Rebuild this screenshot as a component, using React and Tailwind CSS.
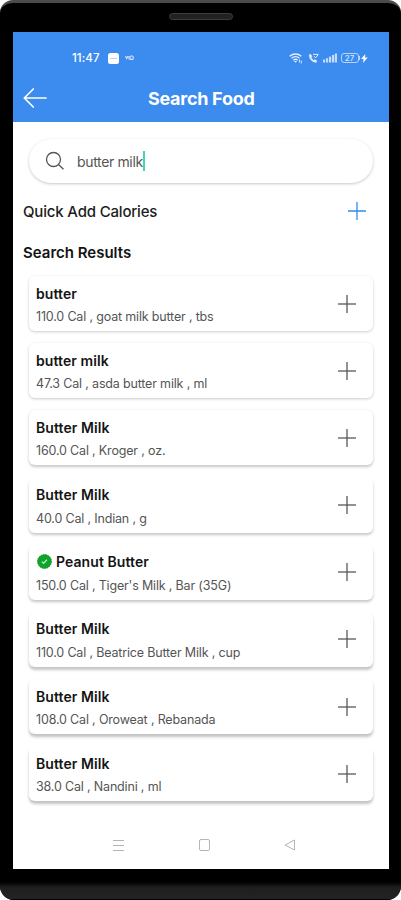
import React from 'react';

const foods = [
  { name: 'butter', detail: '110.0 Cal , goat milk butter , tbs' },
  { name: 'butter milk', detail: '47.3 Cal , asda butter milk , ml' },
  { name: 'Butter Milk', detail: '160.0 Cal , Kroger , oz.' },
  { name: 'Butter Milk', detail: '40.0 Cal , Indian , g' },
  { name: 'Peanut Butter', detail: "150.0 Cal , Tiger's Milk , Bar (35G)", verified: true },
  { name: 'Butter Milk', detail: '110.0 Cal , Beatrice Butter Milk , cup' },
  { name: 'Butter Milk', detail: '108.0 Cal , Oroweat , Rebanada' },
  { name: 'Butter Milk', detail: '38.0 Cal , Nandini , ml' },
];

// Elevation gets stronger towards the bottom of the list
const shadows = [
  'shadow-[0_1px_3px_rgba(0,0,0,0.2)]',
  'shadow-[0_1px_3px_rgba(0,0,0,0.21)]',
  'shadow-[0_1.5px_3px_rgba(0,0,0,0.22)]',
  'shadow-[0_2px_3px_rgba(0,0,0,0.22)]',
  'shadow-[0_2px_3px_rgba(0,0,0,0.23)]',
  'shadow-[0_2.5px_3px_rgba(0,0,0,0.23)]',
  'shadow-[0_2.5px_3px_rgba(0,0,0,0.24)]',
  'shadow-[0_3px_3px_rgba(0,0,0,0.24)]',
];

function PlusIcon({ className }) {
  return (
    <svg className={className} width="18" height="18" viewBox="0 0 18 18" fill="none" stroke="currentColor">
      <path d="M0 9h18" strokeWidth="1.3" />
      <path d="M9 0v18" strokeWidth="1.3" />
    </svg>
  );
}

function StatusBar() {
  return (
    <div className="flex h-[52px] items-center justify-between pl-[59px] pr-[21px] text-white">
      <div className="flex items-center">
        <span className="w-[28px] whitespace-nowrap pt-[2px] text-[11.5px] font-medium leading-none tracking-[0.1px]">11:47</span>
        <svg className="ml-[8px] mr-[1px]" width="11" height="11" viewBox="0 0 11 11">
          <rect width="11" height="11" rx="2.5" fill="#fff" />
          <path d="M2 5.5h7" stroke="#b9d4fa" strokeWidth="1" />
        </svg>
        <svg className="ml-[5px]" width="9" height="6" viewBox="0 0 9 6" fill="none" stroke="#d3e4fd" strokeWidth="1.1">
          <path d="M0.5 1l1.2 2.5L3 1M4 1v3.5" />
          <rect x="5" y="1" width="3.2" height="3.4" rx="1" />
        </svg>
      </div>
      <div className="flex items-center">
        <svg width="14" height="12" viewBox="0 0 14 12" fill="none" stroke="#e4effe" strokeWidth="1.4">
          <path d="M0.7 4.2a8.6 8.6 0 0 1 11.6 0M2.6 6.2a5.7 5.7 0 0 1 7.8 0M4.4 8.2a3.1 3.1 0 0 1 4.2 0" />
          <path d="M6.5 10.8L4.9 8.9h3.2z" fill="#e4effe" stroke="none" />
          <path d="M10.5 7.5v3M12.3 8.5v3" strokeWidth="0.9" />
        </svg>
        <svg className="ml-[5px]" width="11" height="11" viewBox="0 0 11 11" fill="none" stroke="#e4effe">
          <path d="M1.3 1.5C0.9 5.5 4 9.3 8.3 9.4L8.9 7.8 6.8 6.6 5.8 7.3C4.7 6.7 3.8 5.6 3.3 4.4L4 3.2 2.8 1.3z" fill="#e4effe" strokeWidth="0.4" />
          <path d="M5 1.4h5.5M6 3.2l1.6 1.6L10 2" strokeWidth="1" />
        </svg>
        <svg className="ml-[4px]" width="14" height="10" viewBox="0 0 14 10" fill="#c3dafc">
          <rect x="0" y="6.5" width="2.2" height="3" />
          <rect x="3" y="5.2" width="2.2" height="4.3" />
          <rect x="6" y="3.6" width="2.2" height="5.9" />
          <rect x="9" y="2" width="2.2" height="7.5" />
          <rect x="11.8" y="0.5" width="2.2" height="9" />
        </svg>
        <div className="ml-[4px] flex h-[10px] w-[18px] items-center justify-center rounded-[3px] border border-[#b9d4fb] text-[8px] font-medium leading-none text-[#d3e4fd]">
          27
        </div>
        <div className="h-[4px] w-[1.5px] bg-[#b9d4fb]" />
        <svg className="ml-[1px]" width="7" height="9" viewBox="0 0 7 9" fill="#fff">
          <path d="M4.3 0L0 5.1h2.6L2 9l4.8-5.4H4z" />
        </svg>
      </div>
    </div>
  );
}

function FoodCard({ food, shadow }) {
  return (
    <div className={`flex h-[55px] shrink-0 items-center justify-between rounded-[6px] bg-white pl-[7px] pr-[17px] ${shadow}`}>
      <div className="pt-[2px]">
        <div className="flex h-[20px] items-center pt-[1px]">
          {food.verified && (
            <svg className="mb-[2px] ml-[1px] mr-[4px]" width="15" height="15" viewBox="0 0 15 15">
              <circle cx="7.5" cy="7.5" r="7" fill="#0fa32b" stroke="#0b8f25" strokeWidth="0.8" strokeDasharray="1.6 0.8" />
              <path d="M4.8 7.6l1.8 1.7 3.3-3.5" fill="none" stroke="#b5ecc0" strokeWidth="1.3" />
            </svg>
          )}
          <span className="whitespace-nowrap text-[14px] font-semibold leading-none tracking-[0.08px] text-[#141414]">{food.name}</span>
        </div>
        <div className="mt-[5px] whitespace-nowrap text-[12.5px] leading-[18px] tracking-[-0.17px] text-[#555]">{food.detail}</div>
      </div>
      <PlusIcon className="text-[#585858]" />
    </div>
  );
}

function App() {
  return (
    <div className="flex h-[900px] w-[401px] flex-col overflow-hidden bg-white font-['Inter','Liberation_Sans',sans-serif]">
      <div className="flex h-full flex-col overflow-hidden rounded-t-[13px] rounded-b-[14px] border-t-[3px] border-t-[#4b4b4b] bg-black">
        <div className="flex h-[29px] shrink-0 items-center justify-center">
          <div className="mt-[-2px] h-[7px] w-[64px] rounded-full border border-[#3c3c3c] bg-[#222]" />
        </div>

        <div className="ml-[13px] flex h-[837px] w-[376px] shrink-0 flex-col overflow-hidden bg-white">
          <div className="h-[90px] shrink-0 bg-[#3c8bef]">
            <StatusBar />
            <div className="flex h-[28px] items-center pl-[10px]">
              <svg width="24" height="20" viewBox="0 0 24 20" fill="none" stroke="#fff" strokeWidth="1.7" strokeLinecap="round" strokeLinejoin="round">
                <path d="M23 10H1.3M10.3 1L1.3 10l9 9" />
              </svg>
              <h1 className="ml-[101px] whitespace-nowrap pt-[2px] text-[18px] font-bold leading-none tracking-[-0.28px] text-white">Search Food</h1>
            </div>
          </div>

          <div className="mt-[17px] mr-[16px] ml-[16px] flex h-[44px] shrink-0 items-center rounded-full bg-white pl-[16px] shadow-[0_1px_3px_rgba(0,0,0,0.22)]">
            <svg width="20" height="20" viewBox="0 0 20 20" fill="none" stroke="#555" strokeWidth="1.3">
              <circle cx="8.5" cy="8.5" r="7" />
              <path d="M13.5 13.5l5 4.7" />
            </svg>
            <span className="ml-[12px] whitespace-nowrap text-[14px] tracking-[-0.35px] text-[#555]">butter milk</span>
            <span className="h-[20px] w-[2px] shrink-0 bg-[#42d6b2]" />
          </div>

          <div className="flex h-[56px] shrink-0 items-center justify-between pl-[10px] pr-[23px]">
            <span className="text-[15px] font-medium leading-none tracking-[-0.18px] text-[#1c1c1c]">Quick Add Calories</span>
            <PlusIcon className="text-[#318bf0]" />
          </div>
          <h2 className="flex h-[25px] shrink-0 items-center pl-[10px] pt-[1px] text-[15px] font-semibold leading-none text-[#141414]">Search Results</h2>

          <div className="mt-[12px] flex h-[546px] shrink-0 flex-col gap-[12.2px] px-[16px]">
            {foods.map((food, i) => (
              <FoodCard key={i} food={food} shadow={shadows[i]} />
            ))}
          </div>

          <div className="flex h-[46px] shrink-0 items-center pl-[100px]">
            <svg width="12" height="12" viewBox="0 0 12 12" stroke="#b4b4b4" strokeWidth="1">
              <path d="M0 1.5h11M0 6.5h11M0 11.5h11" />
            </svg>
            <svg className="ml-[74px]" width="12" height="12" viewBox="0 0 12 12" fill="none" stroke="#b4b4b4" strokeWidth="1">
              <rect x="0.5" y="0.5" width="10" height="11" rx="1.5" />
            </svg>
            <svg className="ml-[73px]" width="12" height="12" viewBox="0 0 12 12" fill="none" stroke="#b4b4b4" strokeWidth="1">
              <path d="M10.5 1v10L1 6z" strokeLinejoin="round" />
            </svg>
          </div>
        </div>

        <div className="mt-auto h-[21px] shrink-0 border-b border-b-black bg-linear-to-b from-black via-[#1e1e1e] via-40% to-[#232323]" />
      </div>
    </div>
  );
}

export default App;
